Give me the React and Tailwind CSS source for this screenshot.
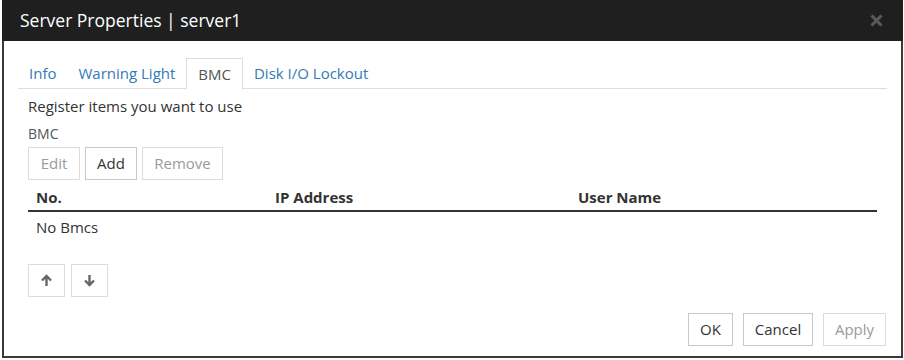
import React from 'react';

const font = { fontFamily: '"Open Sans", "Noto Sans", sans-serif' };

function Btn({ children, disabled, className = '' }) {
  return (
    <button
      className={`h-[33px] border bg-white text-[15px] ${
        disabled ? 'border-[#dcdcdc] text-[#9a9a9a]' : 'border-[#c8c8c8] text-[#333]'
      } ${className}`}
    >
      {children}
    </button>
  );
}

function Arrow({ down }) {
  return (
    <svg width="13" height="13" viewBox="0 0 13 13" className={down ? 'rotate-180' : ''}>
      <path d="M6.5 12V2M2 6.5l4.5-4.5 4.5 4.5" fill="none" stroke="#666" strokeWidth="2.4" />
    </svg>
  );
}

export default function App() {
  const tabs = ['Info', 'Warning Light', 'BMC', 'Disk I/O Lockout'];
  return (
    <div className="w-[904px] h-[360px] bg-white" style={font}>
      <div className="ml-[2px] w-[901px] h-[358px] border-2 border-t-0 border-[#3a3a3a] flex flex-col">
        <div className="h-[41px] -mx-[2px] bg-[#1f1f1f] flex items-center justify-between pl-[18px] pr-[20px]">
          <span className="text-white text-[17.5px]">Server Properties | server1</span>
          <svg width="13" height="13" viewBox="0 0 13 13">
            <path d="M1.5 1.5l10 10M11.5 1.5l-10 10" stroke="#5a5a5a" strokeWidth="3" />
          </svg>
        </div>

        <div className="flex-1 flex flex-col pt-[17px] px-[14px]">
          <div className="flex h-[31px] border-b border-[#dddddd]">
            {tabs.map((t) => (
              <div
                key={t}
                className={`px-[11px] h-[31px] flex items-center text-[15px] ${
                  t === 'BMC'
                    ? 'border border-[#dddddd] border-b-white bg-white text-[#555] h-[32px]'
                    : 'text-[#337ab7]'
                }`}
              >
                {t}
              </div>
            ))}
          </div>

          <div className="px-[10px] flex flex-col">
            <p className="mt-[7px] text-[15px] leading-[20px] text-[#333]">Register items you want to use</p>
            <p className="mt-[9px] text-[14px] leading-[18px] text-[#555]">BMC</p>
            <div className="mt-[4px] flex gap-[5px]">
              <Btn disabled className="w-[52px]">Edit</Btn>
              <Btn className="w-[52px]">Add</Btn>
              <Btn disabled className="w-[81px]">Remove</Btn>
            </div>

            <div className="flex h-[32px] pt-[7px] border-b-2 border-[#333] text-[15px] font-bold text-[#333] leading-[20px]">
              <div className="w-[239px] px-[8px]">No.</div>
              <div className="w-[303px] px-[8px]">IP Address</div>
              <div className="flex-1 px-[8px]">User Name</div>
            </div>
            <p className="pt-[5px] px-[8px] text-[15px] leading-[20px] text-[#333]">No Bmcs</p>

            <div className="mt-[27px] flex gap-[6px]">
              <Btn className="w-[37px] flex items-center justify-center !border-[#dcdcdc]"><Arrow /></Btn>
              <Btn className="w-[37px] flex items-center justify-center !border-[#dcdcdc]"><Arrow down /></Btn>
            </div>
          </div>

          <div className="mt-[16px] flex justify-end gap-[10px] pr-[1px]">
            <Btn className="w-[45px]">OK</Btn>
            <Btn className="w-[70px]">Cancel</Btn>
            <Btn disabled className="w-[63px]">Apply</Btn>
          </div>
        </div>
      </div>
    </div>
  );
}
